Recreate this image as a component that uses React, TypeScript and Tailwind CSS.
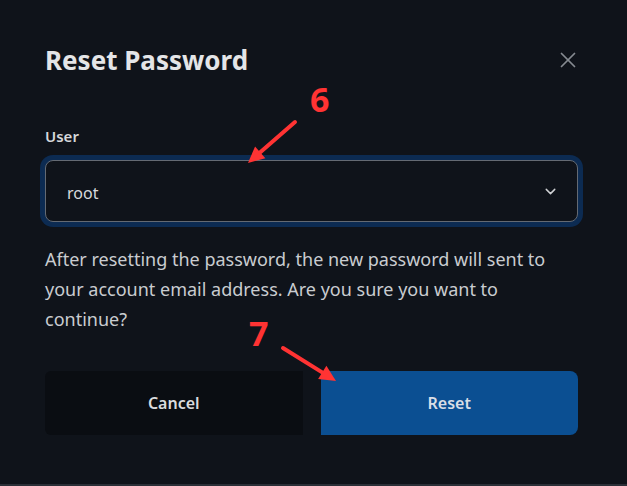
import React from 'react';
import { X, ChevronDown } from 'lucide-react';

function Marker({ n, className }: { n: string; className: string }) {
  return (
    <span className={`absolute text-[34px] font-bold leading-none text-[#ff3333] ${className}`}>{n}</span>
  );
}

function Arrow({ className, x1, y1, x2, y2 }: { className: string; x1: number; y1: number; x2: number; y2: number }) {
  // arrow drawn from (x1,y1) to tip (x2,y2) in a 100x100 box
  const ang = Math.atan2(y2 - y1, x2 - x1);
  const head = 18;
  const spread = 0.45;
  const ax = x2 - head * Math.cos(ang - spread);
  const ay = y2 - head * Math.sin(ang - spread);
  const bx = x2 - head * Math.cos(ang + spread);
  const by = y2 - head * Math.sin(ang + spread);
  const lx = x2 - head * 0.8 * Math.cos(ang);
  const ly = y2 - head * 0.8 * Math.sin(ang);
  return (
    <svg className={`absolute pointer-events-none ${className}`} width="100" height="100" viewBox="0 0 100 100">
      <line x1={x1} y1={y1} x2={lx} y2={ly} stroke="#ff3333" strokeWidth="4" strokeLinecap="round" />
      <polygon points={`${x2},${y2} ${ax},${ay} ${bx},${by}`} fill="#ff3333" />
    </svg>
  );
}

export default function App() {
  return (
    <div
      className="relative w-[627px] h-[486px] bg-[#0f131a] border-b-2 border-[#2a2f37] overflow-hidden"
      style={{ fontFamily: '"Noto Sans", "Open Sans", sans-serif' }}
    >
      <div className="flex flex-col pl-[45px] pr-[49px] pt-[40px]">
        <div className="flex items-center justify-between">
          <h2 className="text-[26px] font-bold leading-[40px] text-[#e4e5e7]">Reset Password</h2>
          <X className="w-[26px] h-[26px] text-[#868a91] -mr-[3px]" strokeWidth={1.6} />
        </div>

        <label className="mt-[46px] text-[15px] font-semibold leading-[20px] text-[#d6d8db]">User</label>

        <div className="mt-[14px] h-[62px] flex items-center justify-between rounded-lg border border-[#646a73] ring-[5px] ring-[#0c2b52] bg-[#0f131a] pl-[21px] pr-[18px]">
          <span className="pt-[4px] text-[16px] text-[#d8dadd]">root</span>
          <ChevronDown className="w-[17px] h-[17px] text-[#cfd1d4]" strokeWidth={2} />
        </div>

        <p className="mt-[22px] text-[18px] leading-[30px] text-[#c9ccd0]">
          After resetting the password, the new password will sent to your account email address. Are you sure you want to continue?
        </p>

        <div className="mt-[37px] flex gap-[18px]">
          <button className="flex-1 h-[64px] rounded-l-md bg-[#0a0d12] text-[16px] font-semibold text-[#d9dbde]">
            Cancel
          </button>
          <button className="flex-1 h-[64px] rounded-r-lg bg-[#0b4f92] text-[16px] font-semibold text-[#d9dee6]">
            Reset
          </button>
        </div>
      </div>

      <Marker n="6" className="left-[310px] top-[82px]" />
      <Arrow className="left-[230px] top-[100px]" x1={65} y1={22} x2={18} y2={63} />
      <Marker n="7" className="left-[249px] top-[316px]" />
      <Arrow className="left-[260px] top-[320px]" x1={23} y1={28} x2={76} y2={61} />
    </div>
  );
}
